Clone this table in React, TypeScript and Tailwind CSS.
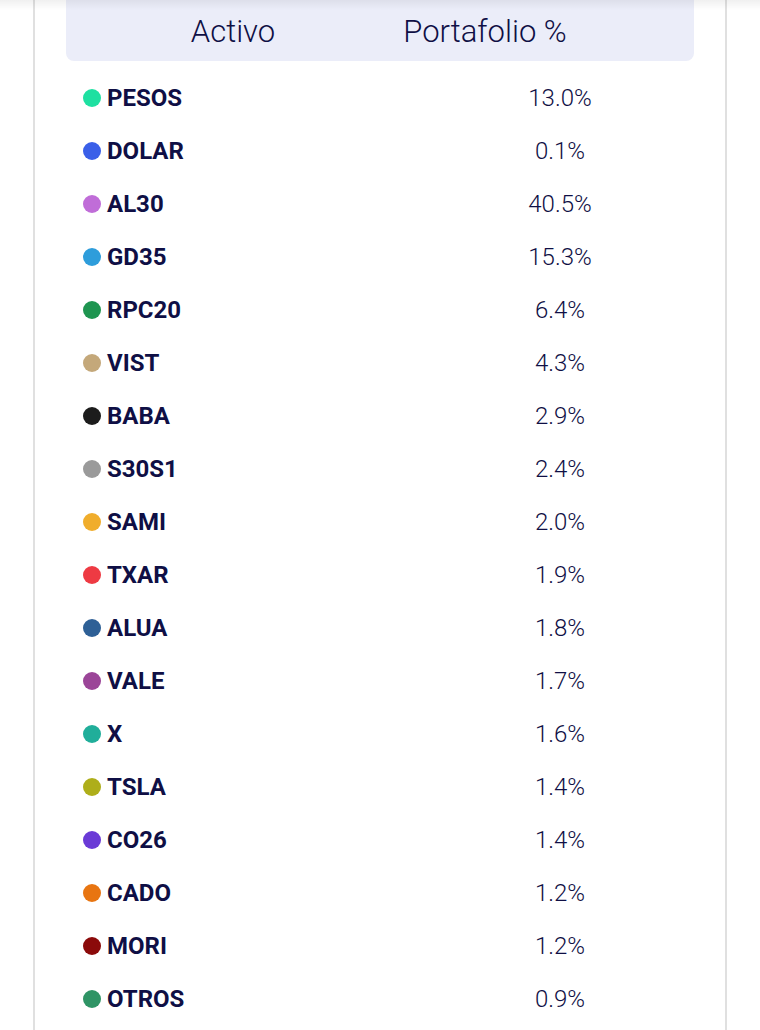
const rows = [
  { name: "PESOS", color: "bg-[#1ee0a1]", pct: "13.0%" },
  { name: "DOLAR", color: "bg-[#3a5fe8]", pct: "0.1%" },
  { name: "AL30", color: "bg-[#c06dd8]", pct: "40.5%" },
  { name: "GD35", color: "bg-[#2e9ddb]", pct: "15.3%" },
  { name: "RPC20", color: "bg-[#1e9550]", pct: "6.4%" },
  { name: "VIST", color: "bg-[#c4a87a]", pct: "4.3%" },
  { name: "BABA", color: "bg-[#1c1c1c]", pct: "2.9%" },
  { name: "S30S1", color: "bg-[#9a9a9a]", pct: "2.4%" },
  { name: "SAMI", color: "bg-[#f0ad2c]", pct: "2.0%" },
  { name: "TXAR", color: "bg-[#ee3a43]", pct: "1.9%" },
  { name: "ALUA", color: "bg-[#2e6096]", pct: "1.8%" },
  { name: "VALE", color: "bg-[#9b4598]", pct: "1.7%" },
  { name: "X", color: "bg-[#20ae9a]", pct: "1.6%" },
  { name: "TSLA", color: "bg-[#aeae1a]", pct: "1.4%" },
  { name: "CO26", color: "bg-[#6a3ad6]", pct: "1.4%" },
  { name: "CADO", color: "bg-[#e87511]", pct: "1.2%" },
  { name: "MORI", color: "bg-[#8b0a0a]", pct: "1.2%" },
  { name: "OTROS", color: "bg-[#2f9465]", pct: "0.9%" },
];

const App = () => {
  return (
    <div className="relative w-[760px] h-[1030px] overflow-hidden bg-white font-['Roboto',sans-serif] text-[#0f0f45]">
      <div className="absolute top-0 left-0 right-0 h-[10px] bg-gradient-to-b from-black/[0.06] to-transparent" />
      <div className="ml-[33px] w-[694px] h-full border-x-2 border-[#e0e0e0]">
        <div className="mx-[31px] h-[61px] pt-[4px] rounded-b-lg bg-[#ebedf9] grid grid-cols-[334px_170px] items-center text-[31px] font-light">
          <p className="text-center">Activo</p>
          <p className="text-center">Portafolio %</p>
        </div>
        <div className="mx-[31px] pt-[10px]">
          {rows.map((row) => (
            <div key={row.name} className="flex items-center h-[53px] pl-[17px] pr-[64px]">
              <div className="flex flex-1 items-center gap-[6px]">
                <span className={`w-[18px] h-[18px] rounded-full ${row.color}`} />
                <p className="text-[24px] font-bold">{row.name}</p>
              </div>
              <p className="w-[140px] text-center text-[24px] font-light">{row.pct}</p>
            </div>
          ))}
        </div>
      </div>
    </div>
  );
};

export default App;
